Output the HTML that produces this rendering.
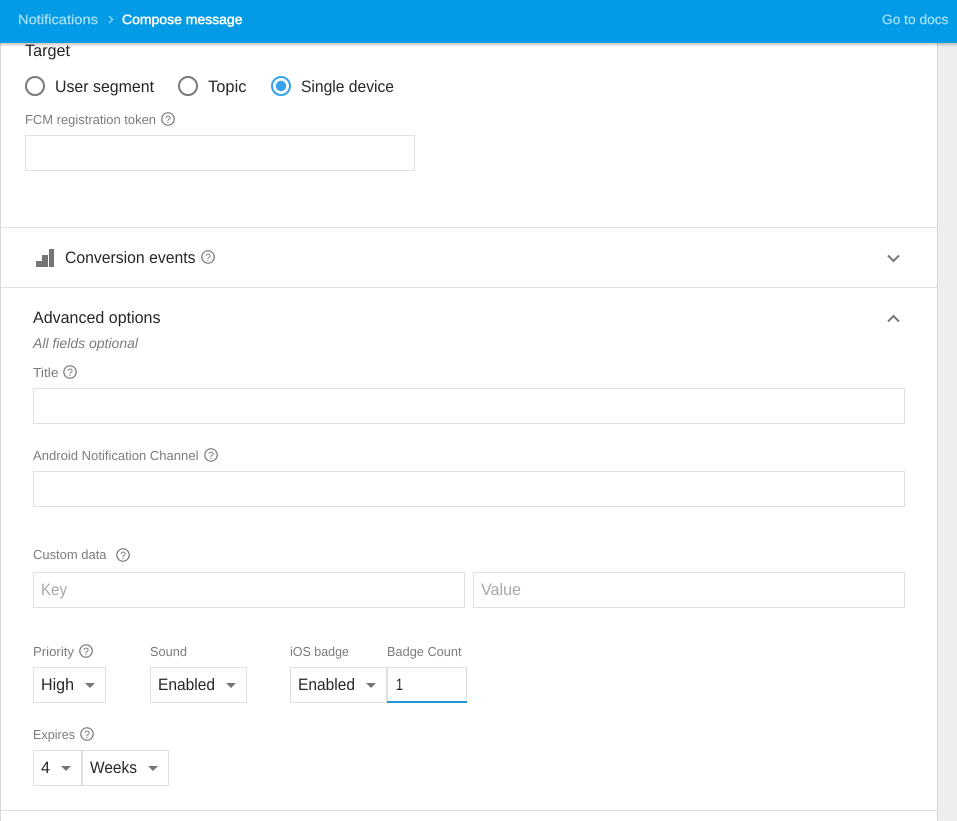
<!DOCTYPE html>
<html><head><meta charset="utf-8">
<style>
html,body{margin:0;padding:0;width:957px;height:821px;overflow:hidden;background:#fff}
svg{position:absolute;left:0;top:0;display:block}
text{font-family:"Liberation Sans",sans-serif;text-rendering:geometricPrecision}
.b{font-size:16.5px;fill:#262626}
.l{font-size:13px;fill:#7c7c7c}
.p{font-size:16.5px;fill:#a8a8a8}
.box{fill:#fff;stroke:#e0e0e0;stroke-width:1}
.q circle{fill:none;stroke:#757575;stroke-width:1.2}
.q text{font-size:10.5px;fill:#757575;text-anchor:middle}
.arr{fill:#757575}
</style></head><body>
<svg width="957" height="821" viewBox="0 0 957 821" xmlns="http://www.w3.org/2000/svg">
<defs>
<linearGradient id="sh" x1="0" y1="0" x2="0" y2="1"><stop offset="0" stop-color="#000" stop-opacity=".22"/><stop offset="1" stop-color="#000" stop-opacity="0"/></linearGradient>
<g id="q" class="q"><circle cx="0" cy="0" r="6.200"/><text x="0" y="3.800">?</text></g>
</defs>
<rect width="957" height="821" fill="#fff"/>
<rect x="938" y="0" width="19" height="821" fill="#eceeef"/>
<rect x="937" y="0" width="1" height="821" fill="#d2d4d5"/>
<rect x="0" y="0" width="1" height="821" fill="#d8d8d8"/>

<rect x="1" y="227" width="936" height="1" fill="#e0e0e0"/>
<rect x="1" y="287" width="936" height="1" fill="#e0e0e0"/>
<rect x="1" y="810" width="936" height="1" fill="#e0e0e0"/>

<text x="25" y="56" class="b" textLength="45" lengthAdjust="spacingAndGlyphs">Target</text>
<circle cx="35" cy="86" r="9" fill="none" stroke="#7a7a7a" stroke-width="2"/>
<text x="55" y="92" class="b" textLength="99" lengthAdjust="spacingAndGlyphs">User segment</text>
<circle cx="188" cy="86" r="9" fill="none" stroke="#7a7a7a" stroke-width="2"/>
<text x="208" y="92" class="b" textLength="38.500" lengthAdjust="spacingAndGlyphs">Topic</text>
<circle cx="281" cy="86" r="9" fill="none" stroke="#35a3ea" stroke-width="2"/>
<circle cx="281" cy="86" r="5.200" fill="#35a3ea"/>
<text x="301" y="92" class="b" textLength="93" lengthAdjust="spacingAndGlyphs">Single device</text>

<text x="25" y="124" class="l" textLength="131" lengthAdjust="spacingAndGlyphs">FCM registration token</text>
<use href="#q" x="168" y="119"/>
<rect x="25.500" y="135.500" width="389" height="35" class="box"/>

<g fill="#757575">
<rect x="36" y="261" width="6" height="6"/>
<rect x="42" y="255" width="6" height="12"/>
<rect x="49" y="249" width="5" height="18"/>
</g>
<text x="65" y="263" class="b" textLength="130.500" lengthAdjust="spacingAndGlyphs">Conversion events</text>
<use href="#q" x="208" y="257"/>
<path d="M888 255.500l5.500 5.500 5.500-5.500" fill="none" stroke="#757575" stroke-width="2"/>

<text x="33" y="323" class="b" textLength="127.500" lengthAdjust="spacingAndGlyphs">Advanced options</text>
<path d="M888 321.500l5.500-5.500 5.500 5.500" fill="none" stroke="#757575" stroke-width="2"/>
<text x="33" y="348" font-size="14" font-style="italic" fill="#7c7c7c" textLength="105" lengthAdjust="spacingAndGlyphs">All fields optional</text>

<text x="33" y="377" class="l" textLength="25.500" lengthAdjust="spacingAndGlyphs">Title</text>
<use href="#q" x="70" y="372"/>
<rect x="33.500" y="388.500" width="871" height="35" class="box"/>

<text x="33" y="460" class="l" textLength="165.500" lengthAdjust="spacingAndGlyphs">Android Notification Channel</text>
<use href="#q" x="211" y="455"/>
<rect x="33.500" y="471.500" width="871" height="35" class="box"/>

<text x="33" y="559" class="l" textLength="73.500" lengthAdjust="spacingAndGlyphs">Custom data</text>
<use href="#q" x="123" y="555"/>
<rect x="33.500" y="572.500" width="431" height="35" class="box"/>
<rect x="473.500" y="572.500" width="431" height="35" class="box"/>
<text x="41" y="595" class="p" textLength="26" lengthAdjust="spacingAndGlyphs">Key</text>
<text x="481" y="595" class="p" textLength="40" lengthAdjust="spacingAndGlyphs">Value</text>

<text x="33" y="656" class="l" textLength="41" lengthAdjust="spacingAndGlyphs">Priority</text>
<use href="#q" x="86" y="651"/>
<text x="150" y="656" class="l" textLength="37" lengthAdjust="spacingAndGlyphs">Sound</text>
<text x="290" y="656" class="l" textLength="59" lengthAdjust="spacingAndGlyphs">iOS badge</text>
<text x="387" y="656" class="l" textLength="74.500" lengthAdjust="spacingAndGlyphs">Badge Count</text>

<rect x="33.500" y="667.500" width="72" height="35" class="box"/>
<text x="41" y="690" class="b" textLength="33" lengthAdjust="spacingAndGlyphs">High</text>
<path d="M85 683h10l-5 5z" class="arr"/>

<rect x="150.500" y="667.500" width="96" height="35" class="box"/>
<text x="158" y="690" class="b" textLength="57" lengthAdjust="spacingAndGlyphs">Enabled</text>
<path d="M226 683h10l-5 5z" class="arr"/>

<rect x="290.500" y="667.500" width="96" height="35" class="box"/>
<text x="298" y="690" class="b" textLength="57" lengthAdjust="spacingAndGlyphs">Enabled</text>
<path d="M366 683h10l-5 5z" class="arr"/>

<rect x="387.500" y="667.500" width="79" height="35" class="box"/>
<rect x="387" y="701" width="80" height="2" fill="#2196d3"/>
<text x="396" y="690" class="b" textLength="7" lengthAdjust="spacingAndGlyphs">1</text>

<text x="33" y="739" class="l" textLength="42" lengthAdjust="spacingAndGlyphs">Expires</text>
<use href="#q" x="87" y="734"/>
<rect x="33.500" y="750.500" width="48" height="35" class="box"/>
<text x="41" y="773" class="b" textLength="9" lengthAdjust="spacingAndGlyphs">4</text>
<path d="M61 766h10l-5 5z" class="arr"/>
<rect x="82.500" y="750.500" width="86" height="35" class="box"/>
<text x="90" y="773" class="b" textLength="47" lengthAdjust="spacingAndGlyphs">Weeks</text>
<path d="M148 766h10l-5 5z" class="arr"/>

<rect x="0" y="43" width="957" height="4" fill="url(#sh)"/>
<rect x="0" y="0" width="957" height="43" fill="#039be5"/>
<text x="18" y="24" font-size="13.500" fill="#a6e1fb" textLength="80" lengthAdjust="spacingAndGlyphs" stroke="#a6e1fb" stroke-width=".2">Notifications</text>
<path d="M109 16l3.500 3.500-3.500 3.500" fill="none" stroke="#a6e1fb" stroke-width="1.200"/>
<text x="122" y="24" font-size="13.500" fill="#fff" stroke="#fff" stroke-width=".45" textLength="120.500" lengthAdjust="spacingAndGlyphs">Compose message</text>
<text x="882" y="24" font-size="13.500" fill="#a6e1fb" stroke="#a6e1fb" stroke-width=".2" textLength="66.500" lengthAdjust="spacingAndGlyphs">Go to docs</text>
</svg>
</body></html>
